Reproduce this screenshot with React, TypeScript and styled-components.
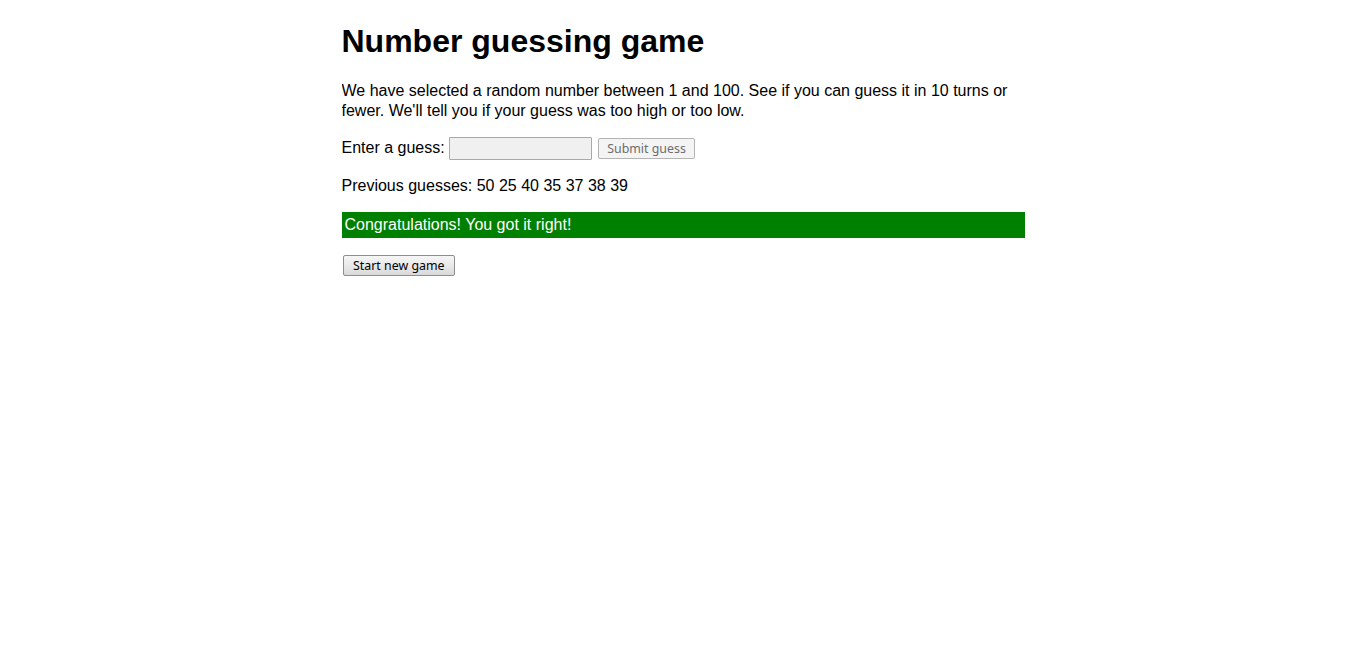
import React from "react";
import styled, { createGlobalStyle } from "styled-components";

const Global = createGlobalStyle`
  html { font-family: "Liberation Sans", Arial, sans-serif; }
  body { margin: 0 auto; width: 50%; max-width: 800px; min-width: 480px; background: #fff; color: #000; }
`;

const Title = styled.h1`
  font-size: 32px;
  font-weight: bold;
  margin: 22.5px 0 21.44px;
  line-height: normal;
`;

const Para = styled.p`
  font-size: 16px;
  margin: 16px 0;
  line-height: 20px;
`;

const Form = styled.div`
  display: flex;
  align-items: center;
  font-size: 16px;
  margin: 16px 0;
`;

const Label = styled.label`
  margin-right: 4px;
`;

const GuessInput = styled.input`
  width: 143px;
  height: 23px;
  box-sizing: border-box;
  background: #f0f0f0;
  border: 1px solid #a9a9a9;
  border-radius: 1px;
  padding: 0 2px;
  margin: 0 6px 0 0;
`;

const Button = styled.button<{ $disabled?: boolean }>`
  font-family: "Noto Sans", Tahoma, sans-serif;
  font-size: 12.4px;
  height: 21px;
  padding: 0 8.5px;
  box-sizing: border-box;
  border-radius: 2px;
  border: 1px solid ${(p) => (p.$disabled ? "#b4b4b4" : "#8e8e8e")};
  color: ${(p) => (p.$disabled ? "#6d6d6d" : "#000")};
  background: ${(p) =>
    p.$disabled
      ? "#f4f4f4"
      : "linear-gradient(#f6f6f6 0%, #e9e9e9 50%, #d9d9d9 100%)"};
  margin: 0;
  line-height: 19px;
  cursor: default;
`;

const Results = styled.div``;

const Line = styled.p<{ $result?: boolean }>`
  font-size: 16px;
  margin: ${(p) => (p.$result ? "16px 0 17px" : "16px 0")};
  line-height: 20px;
  padding: ${(p) => (p.$result ? "3px" : "0")};
  color: ${(p) => (p.$result ? "#fff" : "#000")};
  background: ${(p) => (p.$result ? "green" : "transparent")};
`;

const NewGame = styled(Button)`
  margin-left: 1px;
  display: block;
  padding: 0 9.5px;
`;

export default function App() {
  return (
    <>
      <Global />
      <Title>Number guessing game</Title>
      <Para>
        We have selected a random number between 1 and 100. See if you can
        guess it in 10 turns or fewer. We'll tell you if your guess was too
        high or too low.
      </Para>
      <Form>
        <Label htmlFor="guessField">Enter a guess: </Label>
        <GuessInput id="guessField" type="number" disabled />
        <Button $disabled disabled>
          Submit guess
        </Button>
      </Form>
      <Results>
        <Line>Previous guesses: 50 25 40 35 37 38 39</Line>
        <Line $result>Congratulations! You got it right!</Line>
      </Results>
      <NewGame>Start new game</NewGame>
    </>
  );
}
